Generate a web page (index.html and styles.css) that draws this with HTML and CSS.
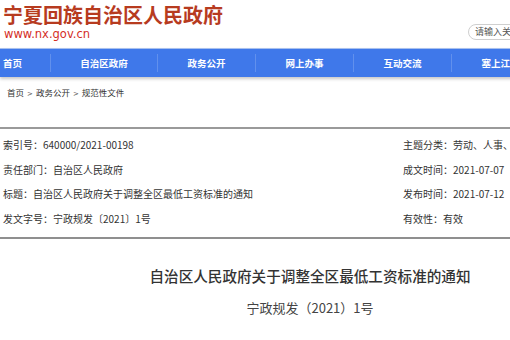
FILE: index.html
```html
<!DOCTYPE html>
<html lang="zh-CN">

<head>
    <meta charset="UTF-8">
    <meta name="viewport" content="width=device-width, initial-scale=1.0">
    <title>自治区人民政府关于调整全区最低工资标准的通知</title>
    <link rel="stylesheet" href="styles.css">
</head>

<body>
    <div class="wrap">
        <div class="header">
            <div class="logo">
                <div class="logo-name">宁夏回族自治区人民政府</div>
                <div class="logo-url">www.nx.gov.cn</div>
            </div>
            <div class="search">请输入关键字</div>
        </div>

        <ul class="nav">
            <li class="nav-item first">首页</li>
            <li class="nav-item wide">自治区政府</li>
            <li class="nav-item">政务公开</li>
            <li class="nav-item">网上办事</li>
            <li class="nav-item">互动交流</li>
            <li class="nav-item">塞上江南</li>
        </ul>

        <div class="crumb">首页<span class="arrow">&gt;</span>政务公开<span class="arrow">&gt;</span>规范性文件</div>

        <div class="info">
            <div class="info-row">索引号：640000/2021-00198</div>
            <div class="info-row">主题分类：劳动、人事、监察</div>
            <div class="info-row">责任部门：自治区人民政府</div>
            <div class="info-row">成文时间：2021-07-07</div>
            <div class="info-row">标题：自治区人民政府关于调整全区最低工资标准的通知</div>
            <div class="info-row">发布时间：2021-07-12</div>
            <div class="info-row">发文字号：宁政规发〔2021〕1号</div>
            <div class="info-row">有效性：有效</div>
        </div>

        <div class="article">
            <h1 class="article-title">自治区人民政府关于调整全区最低工资标准的通知</h1>
            <div class="article-no">宁政规发（2021）1号</div>
        </div>
    </div>
</body>

</html>
```

FILE: styles.css
```css
html,
body {
    overflow: hidden;
}

body {
    margin: 0;
    background-color: #ffffff;
    font-family: "Noto Sans CJK SC", sans-serif;
    color: #333333;
}

.wrap {
    width: 620px;
}

/* 顶部标志和搜索框 */
.header {
    height: 48px;
    display: flex;
    justify-content: space-between;
    align-items: flex-end;
}

.logo {
    align-self: flex-start;
    padding: 2px 0 0 3px;
}

.logo-name {
    font-size: 20px;
    line-height: 25px;
    font-weight: 700;
    color: #b73b1f;
}

.logo-url {
    font-family: "DejaVu Sans", sans-serif;
    font-size: 11.5px;
    line-height: 14px;
    color: #d42d1f;
    padding-left: 1px;
}

.search {
    width: 152px;
    height: 16px;
    margin-bottom: 8px;
    border: 1px solid #cfcfcf;
    border-radius: 9px;
    box-sizing: border-box;
    padding-left: 6px;
    font-size: 9px;
    line-height: 14px;
    color: #555555;
}

/* 导航 */
.nav {
    display: flex;
    align-items: center;
    height: 28px;
    margin: 0;
    padding: 0;
    list-style-type: none;
    background-color: #3f78ea;
    border-top: 1px solid #a8c0ee;
    box-shadow: 0 2px 3px rgba(0, 0, 0, 0.22);
}

.nav-item {
    flex-shrink: 0;
    width: 98px;
    height: 18px;
    line-height: 18px;
    text-align: center;
    font-size: 9.5px;
    font-weight: 700;
    color: #ffffff;
    border-left: 1px solid rgba(255, 255, 255, 0.18);
    box-sizing: border-box;
}

.nav-item.first {
    width: 50px;
    text-align: left;
    padding-left: 3px;
    border-left: none;
}

.nav-item.wide {
    width: 107px;
}

/* 面包屑 */
.crumb {
    height: 50px;
    box-sizing: border-box;
    padding: 8px 0 0 7px;
    font-size: 8.5px;
    line-height: 14px;
    color: #333333;
}

.crumb .arrow {
    margin: 0 3px;
    font-family: "DejaVu Sans", sans-serif;
    font-size: 7px;
    color: #555555;
}

/* 文件信息 */
.info {
    display: grid;
    grid-template-columns: 400px 1fr;
    grid-auto-rows: 24.5px;
    padding: 4px 0 6px 3px;
    border-top: 2px solid #9a9a9a;
    border-bottom: 2px solid #8f8f8f;
}

.info-row {
    font-size: 10px;
    line-height: 24.5px;
    white-space: nowrap;
    color: #333333;
}

/* 正文标题 */
.article {
    text-align: center;
    padding-top: 27px;
}

.article-title {
    margin: 0;
    font-size: 14.6px;
    line-height: 20px;
    font-weight: 500;
    color: #333333;
}

.article-no {
    margin-top: 13px;
    font-size: 13px;
    line-height: 18px;
    color: #444444;
}
```
